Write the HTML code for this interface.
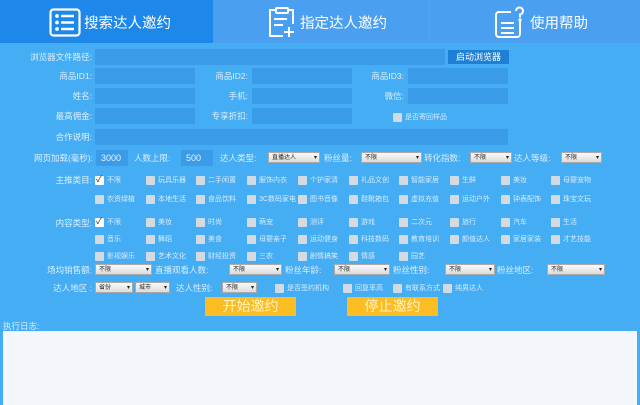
<!DOCTYPE html>
<html><head><meta charset="utf-8">
<style>
*{margin:0;padding:0;box-sizing:border-box}
body{width:640px;height:405px;overflow:hidden;background:#45adf4;font-family:"Liberation Sans","Noto Sans CJK SC",sans-serif;position:relative;color:#e8f4ff}
.a{position:absolute}
.tab{position:absolute;top:0;height:43px;color:#fff;font-size:15px}
.lbl{position:absolute;font-size:8.5px;color:#dcefff;text-align:right;line-height:16px;white-space:nowrap}
.inp{position:absolute;background:#3a9ce9;height:16px}
.sel{position:absolute;background:linear-gradient(#fafafa,#dcdcdc);height:11px;font-size:6px;color:#222;line-height:11px;padding-left:3px;border:1px solid #aaa}
.sel:after{content:"▾";position:absolute;right:2px;top:0;font-size:6px}
.cb{position:absolute;font-size:7px;color:#d6ecff;line-height:9px;white-space:nowrap;padding-left:12px}
.cb:before{content:"";position:absolute;left:0;top:0;width:9px;height:9px;background:#d2dbe4;border-radius:1px}
.cb.on:before{background:#fff}
.cb.on:after{content:"✓";position:absolute;left:1px;top:-1px;font-size:9px;color:#333}
.btn{position:absolute;background:#fbbd22;color:#fff4c8;font-size:14px;text-align:center;line-height:19px;height:19px}
</style></head><body>
<div class="tab" style="left:0;width:213px;background:#1e87ea"></div>
<div class="tab" style="left:213px;width:216px;background:#4a9ff0"></div>
<div class="tab" style="left:430px;width:210px;background:#4a9ff0"></div>
<svg class="a" style="left:49px;top:8px" width="32" height="29" viewBox="0 0 32 29" fill="none" stroke="#fff" stroke-width="2.2"><rect x="1.5" y="1.5" width="29" height="26" rx="3"/><circle cx="8" cy="8" r=".8" fill="#fff"/><circle cx="8" cy="14.5" r=".8" fill="#fff"/><circle cx="8" cy="21" r=".8" fill="#fff"/><path d="M12 8h13M12 14.5h13M12 21h13" stroke-width="2.6"/></svg>
<div class="a" style="left:84px;top:12px;font-size:14.5px;color:#fff">搜索达人邀约</div>
<svg class="a" style="left:267px;top:6px" width="30" height="32" viewBox="0 0 30 32" fill="none" stroke="#fff" stroke-width="2"><path d="M9 4H3v26h13M21 4h5v14"/><rect x="9" y="2" width="12" height="5" rx="1"/><path d="M7 13h13M7 19h9M22 21v10M17 26h10"/></svg>
<div class="a" style="left:300px;top:12px;font-size:14.5px;color:#fff">指定达人邀约</div>
<svg class="a" style="left:495px;top:6px" width="30" height="32" viewBox="0 0 30 32" fill="none" stroke="#fff" stroke-width="2"><path d="M16 6H4a3 3 0 0 0-3 3v19a3 3 0 0 0 3 3h18a3 3 0 0 0 3-3V15"/><path d="M6 17h13M6 22h13M6 27h13"/><path d="M21 5a3.5 3.5 0 1 1 4 3.5v3" /><circle cx="25" cy="14" r=".6" fill="#fff"/></svg>
<div class="a" style="left:530px;top:12px;font-size:14.5px;color:#fff">使用帮助</div>

<div class="lbl" style="left:0;width:92px;top:49px">浏览器文件路径:</div>
<div class="inp" style="left:95px;top:49px;width:350px"></div>
<div class="a" style="left:448px;top:50px;width:61px;height:14px;background:#1d7fd6;font-size:9px;color:#fff;text-align:center;line-height:14px">启动浏览器</div>

<div class="lbl" style="left:0;width:92px;top:68px">商品ID1:</div><div class="inp" style="left:95px;top:68px;width:100px"></div>
<div class="lbl" style="left:160px;width:88px;top:68px">商品ID2:</div><div class="inp" style="left:252px;top:68px;width:100px"></div>
<div class="lbl" style="left:320px;width:84px;top:68px">商品ID3:</div><div class="inp" style="left:408px;top:68px;width:100px"></div>

<div class="lbl" style="left:0;width:92px;top:88px">姓名:</div><div class="inp" style="left:95px;top:88px;width:100px"></div>
<div class="lbl" style="left:160px;width:88px;top:88px">手机:</div><div class="inp" style="left:252px;top:88px;width:100px"></div>
<div class="lbl" style="left:320px;width:84px;top:88px">微信:</div><div class="inp" style="left:408px;top:88px;width:100px"></div>

<div class="lbl" style="left:0;width:92px;top:108px">最高佣金:</div><div class="inp" style="left:95px;top:108px;width:100px"></div>
<div class="lbl" style="left:160px;width:88px;top:108px">专享折扣:</div><div class="inp" style="left:252px;top:108px;width:100px"></div>
<div class="cb" style="left:393px;top:113px">是否寄回样品</div>

<div class="lbl" style="left:0;width:92px;top:129px">合作说明:</div><div class="inp" style="left:95px;top:129px;width:413px"></div>

<div class="lbl" style="left:0;width:93px;top:150px">网页加载(毫秒):</div>
<div class="inp" style="left:96px;top:150px;width:32px;font-size:9px;line-height:16px;padding-left:5px">3000</div>
<div class="lbl" style="left:134px;top:150px">人数上限:</div>
<div class="inp" style="left:181px;top:150px;width:32px;font-size:9px;line-height:16px;padding-left:5px">500</div>
<div class="lbl" style="left:220px;top:150px">达人类型:</div>
<div class="sel" style="left:268px;top:152px;width:52px">直播达人</div>
<div class="lbl" style="left:324px;top:150px">粉丝量:</div>
<div class="sel" style="left:361px;top:152px;width:61px">不限</div>
<div class="lbl" style="left:424px;top:150px">转化指数:</div>
<div class="sel" style="left:470px;top:152px;width:42px">不限</div>
<div class="lbl" style="left:514px;top:150px">达人等级:</div>
<div class="sel" style="left:561px;top:152px;width:41px">不限</div>

<div class="lbl" style="left:0;width:92px;top:172px">主推类目:</div>
<div class="lbl" style="left:0;width:92px;top:215px">内容类型:</div>

<div id="g"></div>

<div class="lbl" style="left:0;width:92px;top:262px">场均销售额:</div>
<div class="sel" style="left:95px;top:264px;width:57px">不限</div>
<div class="lbl" style="left:155px;top:262px">直播观看人数:</div>
<div class="sel" style="left:229px;top:264px;width:53px">不限</div>
<div class="lbl" style="left:285px;top:262px">粉丝年龄:</div>
<div class="sel" style="left:334px;top:264px;width:56px">不限</div>
<div class="lbl" style="left:393px;top:262px">粉丝性别:</div>
<div class="sel" style="left:445px;top:264px;width:50px">不限</div>
<div class="lbl" style="left:497px;top:262px">粉丝地区:</div>
<div class="sel" style="left:547px;top:264px;width:58px">不限</div>

<div class="lbl" style="left:0;width:92px;top:280px">达人地区 :</div>
<div class="sel" style="left:95px;top:282px;width:38px">省份</div>
<div class="sel" style="left:135px;top:282px;width:35px">城市</div>
<div class="lbl" style="left:176px;top:280px">达人性别:</div>
<div class="sel" style="left:222px;top:282px;width:35px">不限</div>
<div class="cb" style="left:275px;top:284px">是否签约机构</div>
<div class="cb" style="left:343px;top:284px">回复率高</div>
<div class="cb" style="left:393px;top:284px">有联系方式</div>
<div class="cb" style="left:443px;top:284px">纯男达人</div>

<div class="btn" style="left:205px;top:297px;width:91px">开始邀约</div>
<div class="btn" style="left:347px;top:297px;width:91px">停止邀约</div>

<div class="lbl" style="left:3px;top:318px;text-align:left">执行日志:</div>
<div class="a" style="left:3px;top:331px;width:634px;height:74px;background:#f3f6fb"></div>

<script>
var xs=[95,146,196,247,298,349,399,450,501,551];
var rows=[[176,["不限","玩具乐器","二手闲置","服饰内衣","个护家清","礼品文创","智能家居","生鲜","美妆","母婴宠物"]],
[195,["农资绿植","本地生活","食品饮料","3C数码家电","图书音像","鞋靴箱包","虚拟充值","运动户外","钟表配饰","珠宝文玩"]],
[218,["不限","美妆","时尚","萌宠","测评","游戏","二次元","旅行","汽车","生活"]],
[235,["音乐","舞蹈","美食","母婴亲子","运动健身","科技数码","教育培训","颜值达人","家居家装","才艺技能"]],
[252,["影视娱乐","艺术文化","财经投资","三农","剧情搞笑","情感","园艺"]]];
var h="";rows.forEach(function(r,ri){r[1].forEach(function(t,i){h+='<div class="cb'+((ri==0||ri==2)&&i==0?' on':'')+'" style="left:'+xs[i]+'px;top:'+r[0]+'px">'+t+'</div>';});});
document.getElementById("g").innerHTML=h;
</script>
</body></html>
